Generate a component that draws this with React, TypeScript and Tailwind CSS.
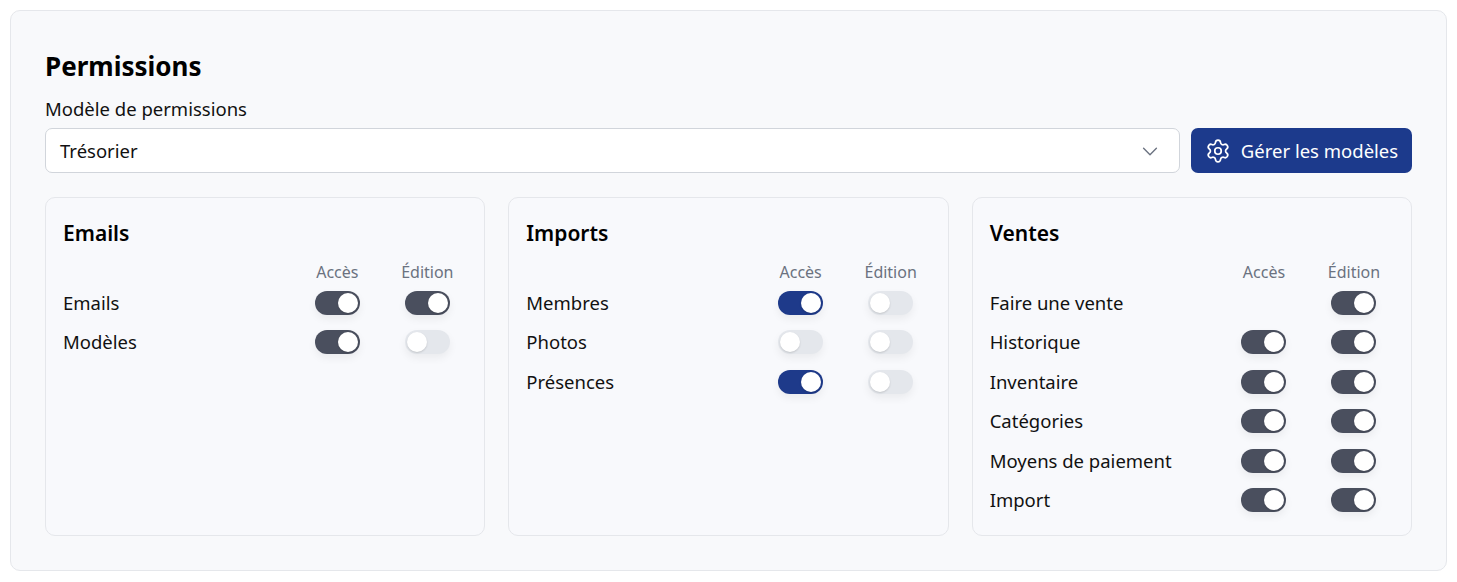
import React from "react";

type T = 0 | 1 | 2; // 0 none, 1 off, 2 on
type Row = { label: string; a: T; e: T };

function Toggle({ on, blue }: { on: boolean; blue?: boolean }) {
  return (
    <div
      className={`relative w-[45px] h-[24px] rounded-full shadow-[0_4px_8px_rgba(0,0,0,0.06)] ${
        on ? (blue ? "bg-[#1e3a8a]" : "bg-[#4a4f5e]") : "bg-[#e4e7ec]"
      }`}
    >
      <div
        className={`absolute top-[2px] w-[20px] h-[20px] rounded-full bg-white shadow-[0_1px_2px_rgba(0,0,0,0.15)] ${
          on ? "left-[23px]" : "left-[2px]"
        }`}
      />
    </div>
  );
}

function Card({ title, rows, blue }: { title: string; rows: Row[]; blue?: boolean }) {
  return (
    <div className="flex-1 h-[339px] rounded-[10px] border border-[#e5e7eb] bg-[#f8f9fc] pl-[17px] pr-[12px] pt-[20px]">
      <div className="text-[21px] font-semibold text-black leading-[30px]">{title}</div>
      <div className="grid grid-cols-[1fr_90px_90px] mt-[14px] text-[16px] text-[#6b7280] leading-[20px]">
        <div />
        <div className="text-center">Accès</div>
        <div className="text-center">Édition</div>
      </div>
      <div className="mt-[1px]">
        {rows.map((r) => (
          <div key={r.label} className="grid grid-cols-[1fr_90px_90px] items-center h-[39.5px] text-[18.5px] text-[#111]">
            <div>{r.label}</div>
            <div className="flex justify-center">{r.a ? <Toggle on={r.a === 2} blue={blue} /> : null}</div>
            <div className="flex justify-center">{r.e ? <Toggle on={r.e === 2} blue={blue} /> : null}</div>
          </div>
        ))}
      </div>
    </div>
  );
}

export default function App() {
  return (
    <div className="bg-white w-[1457px] h-[582px] p-[10px]" style={{ fontFamily: '"Noto Sans", "Open Sans", sans-serif' }}>
      <div className="h-[561px] rounded-[10px] border border-[#e5e7eb] bg-[#f8f9fb] px-[34px] pt-[35px]">
        <h1 className="text-[26px] font-bold text-black leading-[40px]">Permissions</h1>
        <div className="mt-[11px] text-[18.5px] text-[#111] leading-[24px]">Modèle de permissions</div>
        <div className="mt-[7px] flex gap-[11px]">
          <div className="flex-1 h-[45px] rounded-[7px] border border-[#d1d5db] bg-white flex items-center justify-between pl-[14px] pr-[18px] text-[18.5px] text-[#111]">
            <span>Trésorier</span>
            <svg width="22" height="22" viewBox="0 0 24 24" fill="none" stroke="#6b7280" strokeWidth="1.5" strokeLinecap="round" strokeLinejoin="round">
              <path d="m5 9 7 7 7-7" />
            </svg>
          </div>
          <button className="h-[45px] w-[221px] rounded-[7px] bg-[#1c3a8c] text-white text-[18.5px] flex items-center justify-center gap-[10px]">
            <svg width="26" height="26" viewBox="0 0 24 24" fill="none" stroke="white" strokeWidth="1.6" strokeLinecap="round" strokeLinejoin="round">
              <path d="M9.671 4.136a2.34 2.34 0 0 1 4.659 0 2.34 2.34 0 0 0 3.319 1.915 2.34 2.34 0 0 1 2.33 4.033 2.34 2.34 0 0 0 0 3.831 2.34 2.34 0 0 1-2.33 4.033 2.34 2.34 0 0 0-3.319 1.915 2.34 2.34 0 0 1-4.659 0 2.34 2.34 0 0 0-3.32-1.915 2.34 2.34 0 0 1-2.33-4.033 2.34 2.34 0 0 0 0-3.831A2.34 2.34 0 0 1 6.35 6.051a2.34 2.34 0 0 0 3.319-1.915" />
              <circle cx="12" cy="12" r="3" />
            </svg>
            Gérer les modèles
          </button>
        </div>
        <div className="mt-[24px] flex gap-[23px]">
          <Card title="Emails" rows={[{ label: "Emails", a: 2, e: 2 }, { label: "Modèles", a: 2, e: 1 }]} />
          <Card
            title="Imports"
            blue
            rows={[
              { label: "Membres", a: 2, e: 1 },
              { label: "Photos", a: 1, e: 1 },
              { label: "Présences", a: 2, e: 1 },
            ]}
          />
          <Card
            title="Ventes"
            rows={[
              { label: "Faire une vente", a: 0, e: 2 },
              { label: "Historique", a: 2, e: 2 },
              { label: "Inventaire", a: 2, e: 2 },
              { label: "Catégories", a: 2, e: 2 },
              { label: "Moyens de paiement", a: 2, e: 2 },
              { label: "Import", a: 2, e: 2 },
            ]}
          />
        </div>
      </div>
    </div>
  );
}
